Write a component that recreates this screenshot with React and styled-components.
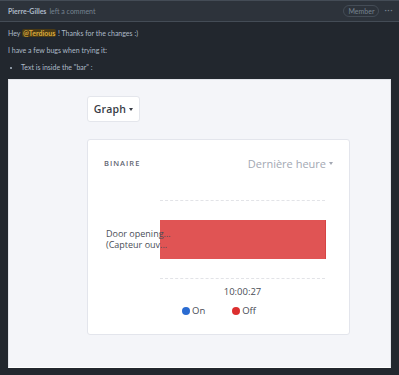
import React from "react";
import styled, { createGlobalStyle } from "styled-components";

const Global = createGlobalStyle`
  html, body { margin: 0; padding: 0; background: #22272e; }
  body { width: 399px; height: 375px; overflow: hidden; }
`;

const Comment = styled.div`
  width: 399px;
  height: 375px;
  background: #22272e;
  font-family: Lato, "Noto Sans", sans-serif;
  color: #adbac7;
  display: flex;
  flex-direction: column;
`;

const Header = styled.div`
  height: 22px;
  box-sizing: border-box;
  background: #2d333b;
  border-top: 1px solid #444c56;
  border-bottom: 1px solid #444c56;
  display: flex;
  align-items: center;
  padding: 0 6px 0 8px;
  font-size: 7px;
`;

const Author = styled.span`
  font-weight: 700;
  color: #adbac7;
`;

const Muted = styled.span`
  color: #768390;
  margin-left: 3px;
`;

const Spacer = styled.div`
  flex: 1;
`;

const Pill = styled.span`
  border: 1px solid #444c56;
  border-radius: 8px;
  padding: 0 4px;
  height: 10px;
  line-height: 10px;
  font-size: 7px;
  color: #768390;
  margin-right: 5px;
`;

const Dots = styled.span`
  color: #768390;
  font-size: 9px;
  letter-spacing: 0.5px;
  line-height: 1;
  margin-top: -3px;
`;

const Body = styled.div`
  padding: 7px 8px 0 8px;
  font-size: 7px;
  display: flex;
  flex-direction: column;
`;

const P = styled.p`
  margin: 0 0 8px 0;
  line-height: 9px;
`;

const Mention = styled.span`
  background: #4a3a14;
  color: #daaa3f;
  font-weight: 700;
  padding: 0 1px;
  border-radius: 2px;
`;

const List = styled.ul`
  margin: 0 0 7px 0;
  padding-left: 13px;
  line-height: 9px;
`;

const Shot = styled.div`
  height: 289px;
  box-sizing: border-box;
  border: 1px solid #e2e4ea;
  border-bottom-color: #ffffff;
  background: #f4f5f9;
  padding: 16px 0 0 78px;
  display: flex;
  flex-direction: column;
  align-items: flex-start;
  font-family: "Open Sans", "Noto Sans", sans-serif;
`;

const Dropdown = styled.button`
  box-sizing: border-box;
  width: 53px;
  height: 26px;
  background: #fff;
  border: 1px solid #e4e6ec;
  border-radius: 3px;
  font-family: inherit;
  font-size: 10.5px;
  font-weight: 600;
  letter-spacing: 0.2px;
  color: #383c45;
  display: flex;
  align-items: center;
  justify-content: center;
  gap: 3px;
  padding: 0;
`;

const Caret = styled.span`
  width: 0;
  height: 0;
  border-left: 2.5px solid transparent;
  border-right: 2.5px solid transparent;
  border-top: 3px solid ${(p) => p.color || "#383c45"};
`;

const Card = styled.div`
  margin-top: 17px;
  box-sizing: border-box;
  width: 263px;
  height: 196px;
  background: #fff;
  border: 1px solid #e3e5ec;
  border-radius: 3px;
  display: flex;
  flex-direction: column;
`;

const CardHead = styled.div`
  display: flex;
  align-items: center;
  justify-content: space-between;
  padding: 16px 16px 0 16px;
  height: 14px;
`;

const Title = styled.span`
  font-size: 7.5px;
  font-weight: 600;
  letter-spacing: 1px;
  color: #5f6573;
`;

const Range = styled.span`
  font-size: 11px;
  color: #a3a8b3;
  display: flex;
  align-items: center;
  gap: 3px;
`;

const Chart = styled.div`
  display: flex;
  margin-top: 30px;
`;

const Labels = styled.div`
  width: 54px;
  padding-left: 18px;
  display: flex;
  flex-direction: column;
  justify-content: center;
  gap: 1px;
  font-size: 9px;
  line-height: 10px;
  color: #4a4e57;
  white-space: nowrap;
  position: relative;
  z-index: 1;
`;

const Plot = styled.div`
  width: 165px;
  box-sizing: border-box;
  border-top: 1px dashed #e2e3e7;
  border-bottom: 1px dashed #e2e3e7;
  padding: 19px 0;
`;

const Bar = styled.div`
  height: 39px;
  background: #e05454;
  border-right: 1px solid #d64444;
  margin-right: -1px;
`;

const Axis = styled.div`
  margin-left: 72px;
  width: 165px;
  text-align: center;
  font-size: 9.5px;
  color: #4a4e57;
  margin-top: 6px;
  line-height: 13px;
`;

const Legend = styled.div`
  display: flex;
  gap: 27px;
  margin-left: 94px;
  margin-top: 6px;
  font-size: 9.5px;
  color: #4a4e57;
`;

const LegendItem = styled.span`
  display: flex;
  align-items: center;
  gap: 2px;
`;

const Dot = styled.span`
  width: 8px;
  height: 8px;
  border-radius: 50%;
  background: ${(p) => p.color};
`;

export default function App() {
  return (
    <>
      <Global />
      <Comment>
        <Header>
          <Author>Pierre-Gilles</Author>
          <Muted>left a comment</Muted>
          <Spacer />
          <Pill>Member</Pill>
          <Dots>···</Dots>
        </Header>
        <Body>
          <P>
            Hey <Mention>@Terdious</Mention> ! Thanks for the changes :)
          </P>
          <P>I have a few bugs when trying it:</P>
          <List>
            <li>Text is inside the "bar" :</li>
          </List>
          <Shot>
            <Dropdown>
              Graph <Caret />
            </Dropdown>
            <Card>
              <CardHead>
                <Title>BINAIRE</Title>
                <Range>
                  Dernière heure <Caret color="#a3a8b3" />
                </Range>
              </CardHead>
              <Chart>
                <Labels>
                  <span>Door opening...</span>
                  <span>(Capteur ouv...</span>
                </Labels>
                <Plot>
                  <Bar />
                </Plot>
              </Chart>
              <Axis>10:00:27</Axis>
              <Legend>
                <LegendItem>
                  <Dot color="#2a6bd1" />
                  On
                </LegendItem>
                <LegendItem>
                  <Dot color="#dc2f2f" />
                  Off
                </LegendItem>
              </Legend>
            </Card>
          </Shot>
        </Body>
      </Comment>
    </>
  );
}
